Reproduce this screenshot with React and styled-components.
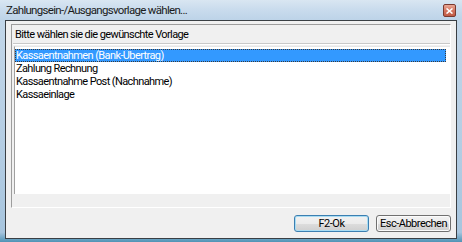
import styled, { createGlobalStyle } from "styled-components";

const GlobalStyle = createGlobalStyle`
  html, body {
    margin: 0;
    padding: 0;
    background: #ffffff;
  }
  * {
    box-sizing: border-box;
  }
`;

const Frame = styled.div`
  width: 462px;
  height: 242px;
  display: flex;
  flex-direction: column;
  padding: 0 5px 4px 5px;
  background: linear-gradient(
    to bottom,
    #c4d8ea 0%,
    #b4cde3 60%,
    #a7c5de 96%,
    #4f93b5 100%
  );
  font-family: Roboto, "Liberation Sans", sans-serif;
  font-size: 11px;
  letter-spacing: -0.6px;
  color: #000;
`;

const TitleBar = styled.div`
  height: 20px;
  display: flex;
  align-items: flex-start;
  justify-content: space-between;
  margin: 0 -5px;
  padding: 0 6px 0 6px;
  background: linear-gradient(
    to bottom,
    #d9e6f2 0%,
    #cadced 45%,
    #bdd3e8 100%
  );
`;

const TitleText = styled.span`
  font-size: 11.5px;
  letter-spacing: -0.7px;
  line-height: 20px;
  color: #1a1a1a;
`;

const CloseButton = styled.div`
  width: 13px;
  height: 13px;
  margin-top: 4px;
  border: 1px solid #7a3a30;
  border-radius: 2px;
  background: linear-gradient(to bottom, #e9a896 0%, #d47560 50%, #c05a44 100%);
  display: flex;
  align-items: center;
  justify-content: center;
`;

const Client = styled.div`
  flex: 1;
  display: flex;
  flex-direction: column;
  border: 1px solid #3a3f44;
  background: #f0f0f0;
  padding: 3px 5px 6px 5px;
`;

const Group = styled.div`
  height: 184px;
  display: flex;
  flex-direction: column;
  border-style: solid;
  border-width: 1px;
  border-color: #9d9d9d #ffffff #ffffff #9d9d9d;
  padding: 0 0 13px 1px;
`;

const Header = styled.div`
  height: 19px;
  padding-left: 2px;
  line-height: 19px;
  border-bottom: 1px solid #c8c8c8;
  box-shadow: 0 1px 0 #ffffff;
`;

const List = styled.div`
  flex: 1;
  margin-top: 2px;
  margin-left: 1px;
  background: #ffffff;
  border-left: 1px solid #a0a0a0;
  border-top: 1px solid #e6e6e6;
  padding: 2px 4px 0 0;
`;

const Item = styled.div`
  height: 13px;
  line-height: 13px;
  padding-left: 1px;
  white-space: nowrap;
  color: ${(p) => (p.$selected ? "#ffffff" : "#000000")};
  background: ${(p) => (p.$selected ? "#3399ff" : "transparent")};
  outline: ${(p) => (p.$selected ? "1px dotted #3a3a3a" : "none")};
  outline-offset: -1px;
`;

const ButtonRow = styled.div`
  display: flex;
  justify-content: flex-end;
  gap: 7px;
  margin-top: 7px;
`;

const Button = styled.button`
  width: 75px;
  height: 17px;
  padding: 0;
  white-space: nowrap;
  font-family: inherit;
  font-size: 11px;
  letter-spacing: -0.5px;
  color: #000;
  border-radius: 3px;
  border: 1px solid ${(p) => (p.$default ? "#3c7fb1" : "#707070")};
  background: linear-gradient(
    to bottom,
    #f2f2f2 0%,
    #ebebeb 50%,
    #dddddd 51%,
    #cfcfcf 100%
  );
  box-shadow: inset 0 0 0 1px
    ${(p) => (p.$default ? "#a8dcf3" : "#fbfbfb")};
`;

const items = [
  "Kassaentnahmen (Bank-Übertrag)",
  "Zahlung Rechnung",
  "Kassaentnahme Post (Nachnahme)",
  "Kassaeinlage",
];

const App = () => {
  return (
    <>
      <GlobalStyle />
      <Frame>
        <TitleBar>
          <TitleText>Zahlungsein-/Ausgangsvorlage wählen...</TitleText>
          <CloseButton>
            <svg width="7" height="6" viewBox="0 0 7 6">
              <path
                d="M0.5 0.5 L6.5 5.5 M6.5 0.5 L0.5 5.5"
                stroke="#ffffff"
                strokeWidth="1.6"
              />
            </svg>
          </CloseButton>
        </TitleBar>
        <Client>
          <Group>
            <Header>Bitte wählen sie die gewünschte Vorlage</Header>
            <List>
              {items.map((label, i) => (
                <Item key={label} $selected={i === 0}>
                  {label}
                </Item>
              ))}
            </List>
          </Group>
          <ButtonRow>
            <Button $default>F2-Ok</Button>
            <Button>Esc-Abbrechen</Button>
          </ButtonRow>
        </Client>
      </Frame>
    </>
  );
};

export default App;
